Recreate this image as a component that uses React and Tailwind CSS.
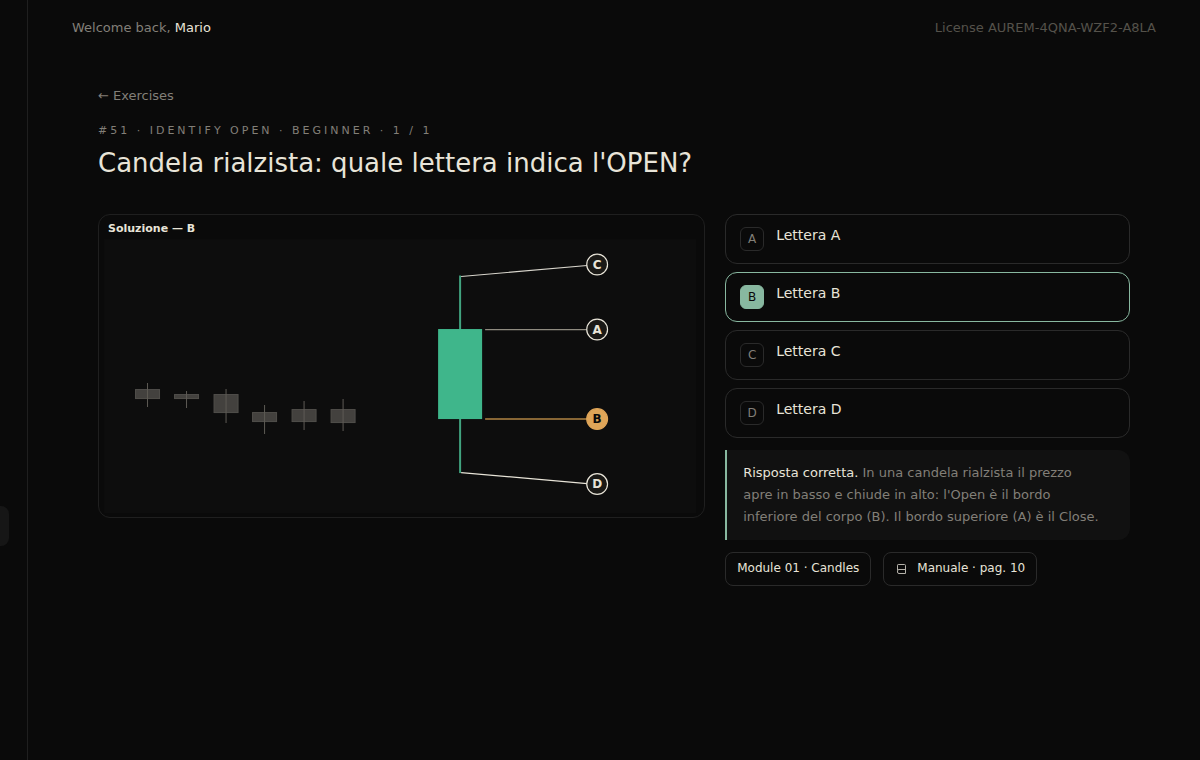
import React, { useState } from "react";
import clsx from "clsx";

const OPTIONS = [
  { id: "A", label: "Lettera A" },
  { id: "B", label: "Lettera B" },
  { id: "C", label: "Lettera C" },
  { id: "D", label: "Lettera D" }
];

// context candles, left of the big one
const CANDLES = [
  { x: 36, top: 174, bottom: 184, high: 168, low: 192 },
  { x: 75, top: 179, bottom: 184, high: 176, low: 193 },
  { x: 114.5, top: 179, bottom: 198, high: 174, low: 208 },
  { x: 153, top: 197, bottom: 207, high: 190, low: 219 },
  { x: 192.5, top: 194, bottom: 207, high: 186, low: 215 },
  { x: 231.5, top: 194, bottom: 208, high: 184, low: 216 }
];

const MARKERS = [
  { id: "C", y: 49.5, from: [362, 61.5], to: [488, 50.5], line: "#d8d5cc" },
  { id: "A", y: 114.5, from: [386, 114.5], to: [488, 114.5], line: "#8f8b80" },
  { id: "B", y: 204, from: [386, 204], to: [488, 204], line: "#b08543", active: true },
  { id: "D", y: 269, from: [362, 257.5], to: [488, 268.5], line: "#e8e4d8" }
];

function Marker({ marker }) {
  const { id, y, from, to, line, active } = marker;
  return (
    <g>
      <line x1={from[0]} y1={from[1]} x2={to[0]} y2={to[1]} stroke={line} strokeWidth={active ? 1.6 : 1.2} />
      <circle
        cx="498"
        cy={y}
        r="10.4"
        fill={active ? "#dfa558" : "#1a1916"}
        stroke={active ? "#dfa558" : "#e8e4d8"}
        strokeWidth="1.2"
      />
      <text
        x="498"
        y={y + 4}
        textAnchor="middle"
        fontSize="12"
        fontWeight="700"
        fill={active ? "#0a0a0a" : "#e8e4d8"}
      >
        {id}
      </text>
    </g>
  );
}

function CandleChart() {
  return (
    <figure className="overflow-hidden rounded-xl border border-[#1f1f1f] bg-[#0a0a0a]">
      <svg viewBox="0 0 605 302" className="block w-full" role="img" aria-label="Soluzione — B">
        <rect x="5" y="24" width="592" height="274" fill="#0d0d0d" />
        <text x="9" y="17" fontSize="11" fontWeight="700" fill="#e8e4d8">
          Soluzione — B
        </text>
        {CANDLES.map((c) => (
          <g key={c.x}>
            <rect x={c.x + 0.5} y={c.top + 0.5} width="24" height={c.bottom - c.top - 1} fill="#43413e" stroke="#504e4a" />
            <line x1={c.x + 12.5} x2={c.x + 12.5} y1={c.high} y2={c.low} stroke="#5e5b55" />
          </g>
        ))}
        <line x1="361" x2="361" y1="60.5" y2="258" stroke="#41a37f" strokeWidth="2" />
        <rect x="339" y="114" width="44" height="90" fill="#3fb68b" />
        {MARKERS.map((m) => (
          <Marker key={m.id} marker={m} />
        ))}
      </svg>
    </figure>
  );
}

function Option({ option, selected, onSelect }) {
  return (
    <button
      type="button"
      aria-pressed={selected}
      onClick={onSelect}
      className={clsx(
        "flex items-start gap-3 rounded-xl border px-3.5 py-3 text-left",
        selected ? "border-[#88b8a0]" : "border-[#2a2a2a]"
      )}
    >
      <span
        className={clsx(
          "flex size-6 shrink-0 items-center justify-center rounded-md border text-xs",
          selected ? "border-[#88b8a0] bg-[#88b8a0] text-[#0a0a0a]" : "border-[#2a2a2a] text-[#827f78]"
        )}
      >
        {option.id}
      </span>
      <span className="text-sm leading-4">{option.label}</span>
    </button>
  );
}

function BookIcon() {
  return (
    <svg viewBox="0 0 12 12" className="size-3" fill="none" stroke="#b5b2aa" aria-hidden="true">
      <path d="M2.5 8V3.2a.7.7 0 0 1 .7-.7h6.3a1 1 0 0 1 1 1v8H4a1.5 1.5 0 0 1-1.5-1.5V9A1.5 1.5 0 0 1 4 7.5h6.5" />
    </svg>
  );
}

export default function App() {
  const [selected, setSelected] = useState("B");

  return (
    <div className="flex min-h-screen bg-[#0a0a0a] font-['DejaVu_Sans',sans-serif] text-[#e8e4d8]">
      <aside className="w-7 shrink-0 border-r border-[#1f1f1f] pt-[506px]">
        <a href="#exercises" aria-label="Exercises" className="block h-10 w-[9px] rounded-r-lg bg-[#161616]" />
      </aside>

      <div className="min-w-0 flex-1">
        <header className="flex items-center justify-between px-11 pt-[18px] text-[13px] leading-5">
          <p className="text-[#827f78]">
            Welcome back, <span className="text-[#e8e4d8]">Mario</span>
          </p>
          <p className="text-[#55524b]">License AUREM-4QNA-WZF2-A8LA</p>
        </header>

        <main className="px-[70px] pt-12">
          <a href="#exercises" className="block text-[13px] leading-5 text-[#827f78]">
            ← Exercises
          </a>
          <p className="mt-[17px] text-[11px] leading-4 tracking-[3px] text-[#827f78] uppercase">
            #51 · Identify open · Beginner · 1 / 1
          </p>
          <h1 className="mt-2 text-[26px] leading-8">Candela rialzista: quale lettera indica l'OPEN?</h1>

          <div className="mt-[35px] grid grid-cols-[3fr_2fr] items-start gap-5">
            <CandleChart />

            <section>
              <div className="flex flex-col gap-2">
                {OPTIONS.map((o) => (
                  <Option key={o.id} option={o} selected={selected === o.id} onSelect={() => setSelected(o.id)} />
                ))}
              </div>

              <p className="mt-3 rounded-r-xl border-l-2 border-[#88b8a0] bg-[#111111] py-3 pr-7 pl-4 text-[13px] leading-[22px] text-[#827f78]">
                <span className="text-[#e8e4d8]">Risposta corretta.</span> In una candela rialzista il prezzo apre in
                basso e chiude in alto: l'Open è il bordo inferiore del corpo (B). Il bordo superiore (A) è il Close.
              </p>

              <div className="mt-3 flex gap-3 text-xs">
                <a href="#module-01" className="rounded-lg border border-[#2a2a2a] px-[11px] pt-[7px] pb-[9px]">
                  Module 01 · Candles
                </a>
                <a
                  href="#manuale-10"
                  className="flex items-center gap-2.5 rounded-lg border border-[#2a2a2a] px-[11px] pt-[7px] pb-[9px]"
                >
                  <BookIcon />
                  Manuale · pag. 10
                </a>
              </div>
            </section>
          </div>
        </main>
      </div>
    </div>
  );
}
